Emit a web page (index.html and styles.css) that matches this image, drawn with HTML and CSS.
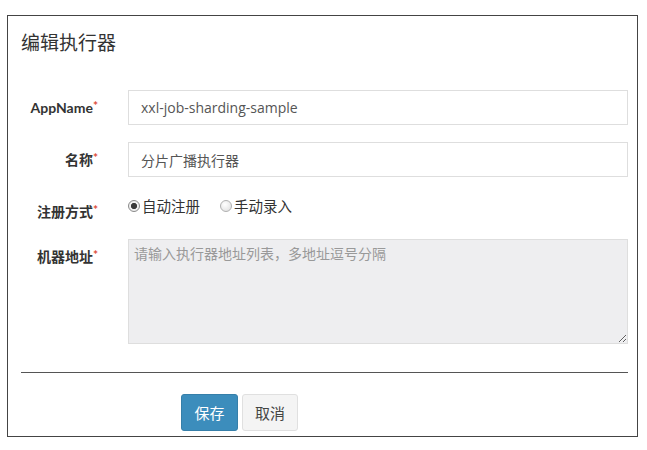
FILE: index.html
```html
<!DOCTYPE html>
<html lang="zh">
<head>
<meta charset="utf-8">
<title>编辑执行器</title>
<link rel="stylesheet" href="styles.css">
</head>
<body>
<div class="modal">
  <div class="modal-header">
    <h4 class="modal-title">编辑执行器</h4>
  </div>
  <form class="modal-body">
    <div class="row">
      <label class="control-label">AppName<span class="req">*</span></label>
      <input class="form-control" type="text" value="xxl-job-sharding-sample">
    </div>
    <div class="row">
      <label class="control-label">名称<span class="req">*</span></label>
      <input class="form-control" type="text" value="分片广播执行器">
    </div>
    <div class="row row-radio">
      <label class="control-label">注册方式<span class="req">*</span></label>
      <div class="radios">
        <span class="radio-inline"><span class="radio checked"></span>自动注册</span>
        <span class="radio-inline"><span class="radio"></span>手动录入</span>
      </div>
    </div>
    <div class="row">
      <label class="control-label">机器地址<span class="req">*</span></label>
      <textarea class="form-control area" readonly placeholder="请输入执行器地址列表，多地址逗号分隔"></textarea>
    </div>
    <hr class="divider">
    <div class="actions">
      <button type="button" class="btn btn-primary">保存</button>
      <button type="button" class="btn btn-default">取消</button>
    </div>
  </form>
</div>
</body>
</html>
```

FILE: styles.css
```css
html, body {
  margin: 0;
  padding: 0;
  background: #ffffff;
}
body {
  font-family: Lato, "Noto Sans CJK SC", sans-serif;
  color: #333;
  font-size: 14px;
}
.modal {
  margin: 15px 0 0 7px;
  width: 629px;
  height: 420px;
  border: 1px solid #444;
  background: #fff;
  box-sizing: content-box;
}
.modal-header {
  padding: 15px 13px 0 13px;
  height: 58px;
  box-sizing: border-box;
}
.modal-title {
  margin: 0;
  font-size: 19px;
  font-weight: normal;
  line-height: 24px;
  color: #333;
}
.modal-body {
  margin: 0;
  padding: 16px 9px 0 13px;
  display: flex;
  flex-direction: column;
  gap: 17px;
}
.row {
  display: grid;
  grid-template-columns: 77px 500px;
  column-gap: 30px;
  align-items: start;
}
.control-label {
  text-align: right;
  font-weight: bold;
  padding-top: 8px;
  line-height: 20px;
  font-size: 14px;
  color: #333;
  white-space: nowrap;
}
.req {
  color: #dd4b39;
  font-size: 12px;
  font-weight: bold;
  vertical-align: top;
  position: relative;
  top: -2px;
}
.form-control {
  display: block;
  width: 500px;
  height: 35px;
  box-sizing: border-box;
  border: 1px solid #dedede;
  border-radius: 0;
  padding: 6px 12px;
  font-family: "Open Sans", "Noto Sans CJK SC", sans-serif;
  font-size: 14px;
  color: #555;
  background: #fff;
  outline: none;
}
.area {
  height: 105px;
  padding: 4px 5px;
  line-height: 20px;
  background: #eeeef0;
  resize: vertical;
}
.area::placeholder {
  color: #999;
}
.row-radio {
  height: 28px;
}
.radios {
  display: flex;
  gap: 20px;
  padding-top: 3px;
  line-height: 20px;
  font-size: 14.5px;
  color: #333;
}
.radio-inline {
  display: flex;
  align-items: center;
  gap: 2px;
}
.radio {
  display: inline-block;
  width: 12px;
  height: 12px;
  box-sizing: border-box;
  border-radius: 50%;
  border: 1px solid #b0b0b0;
  background: radial-gradient(circle at 40% 35%, #ffffff 0%, #dcdcdc 100%);
  position: relative;
  top: -1px;
}
.radio.checked {
  border-color: #8a8a8a;
  background: radial-gradient(circle, #3a3a3a 0 2.8px, #f0f0f0 3.3px);
}
.divider {
  margin: 11px 0 0 0;
  border: 0;
  border-top: 1px solid #555;
  height: 0;
}
.actions {
  display: flex;
  gap: 4px;
  padding-left: 160px;
  margin-top: 4px;
}
.btn {
  height: 37px;
  box-sizing: border-box;
  padding: 0 8px;
  font-family: Lato, "Noto Sans CJK SC", sans-serif;
  font-size: 15px;
  border-radius: 3px;
  border: 1px solid transparent;
  cursor: pointer;
}
.btn-primary {
  width: 57px;
  background: #3c8dbc;
  border-color: #367fa9;
  color: #fff;
}
.btn-default {
  width: 56px;
  background: #f4f4f4;
  border-color: #e0e0e0;
  color: #444;
}
```
